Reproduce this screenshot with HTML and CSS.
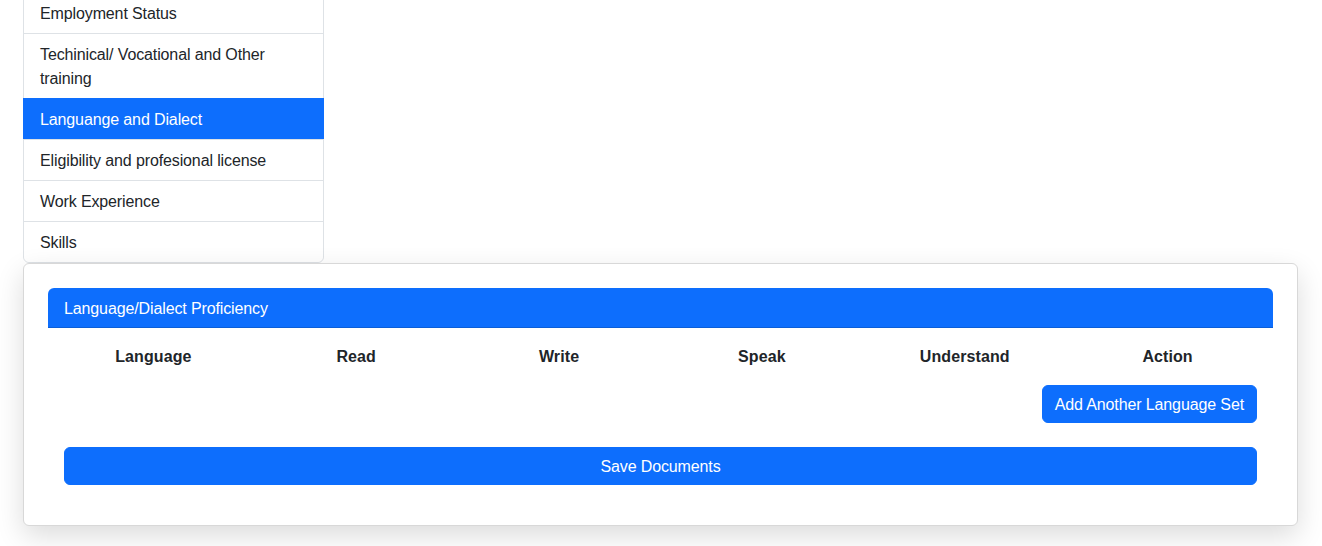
FILE: index.html
```html
<!DOCTYPE html>
<html>
<head>
<meta charset="utf-8">
<link rel="stylesheet" href="styles.css">
</head>
<body>
<div class="page">
  <ul class="list-group">
    <li class="list-item">Employment Status</li>
    <li class="list-item">Techinical/ Vocational and Other training</li>
    <li class="list-item active">Languange and Dialect</li>
    <li class="list-item">Eligibility and profesional license</li>
    <li class="list-item">Work Experience</li>
    <li class="list-item">Skills</li>
  </ul>
  <div class="card">
    <div class="card-header">Language/Dialect Proficiency</div>
    <div class="table-head">
      <div class="th">Language</div>
      <div class="th">Read</div>
      <div class="th">Write</div>
      <div class="th">Speak</div>
      <div class="th">Understand</div>
      <div class="th">Action</div>
    </div>
    <div class="inner">
      <div class="add-row">
        <button class="btn">Add Another Language Set</button>
      </div>
      <button class="btn btn-block">Save Documents</button>
    </div>
  </div>
</div>
</body>
</html>
```
FILE: styles.css
```css
* { box-sizing: border-box; }
html, body { margin: 0; padding: 0; background: #fff; }
body {
  font-family: "Liberation Sans", Arial, sans-serif;
  font-size: 16px;
  line-height: 24px;
  color: #212529;
  letter-spacing: -0.12px;
}
.page {
  margin-top: -8px;
  padding: 0 24px 20px 23px;
}
.list-group {
  list-style: none;
  margin: 0;
  padding: 0;
  width: 301px;
  border: 1px solid #dee2e6;
  border-radius: 0 0 6px 6px;
}
.list-item {
  padding: 9px 16px 7px;
  border-top: 1px solid #dee2e6;
  background: #fff;
}
.list-item:first-child { border-top: 0; }
.list-item:last-child { border-radius: 0 0 6px 6px; }
.list-item.active {
  background: #0d6efd;
  color: #fff;
  border-top-color: #0d6efd;
  margin: 0 -1px;
  padding: 9px 17px 7px;
}
.card {
  border: 1px solid #d8d8d8;
  border-radius: 6px;
  background: #fff;
  box-shadow: 0 10px 28px rgba(0,0,0,0.14);
  padding: 24px;
}
.card-header {
  background: #0d6efd;
  color: #fff;
  height: 40px;
  line-height: 41px;
  padding: 0 16px;
  border-radius: 6px 6px 0 0;
  border-bottom: 1px solid #0b5ed7;
}
.table-head {
  display: grid;
  grid-template-columns: repeat(6, 1fr);
  margin: 0 4px;
  padding: 17px 0 15px;
}
.th {
  text-align: center;
  font-weight: bold;
  letter-spacing: 0.1px;
}
.inner {
  padding: 1px 16px 16px;
}
.add-row {
  display: flex;
  justify-content: flex-end;
  margin-bottom: 24px;
}
.btn {
  font-family: inherit;
  font-size: 16px;
  line-height: 24px;
  letter-spacing: -0.12px;
  color: #fff;
  background: #0d6efd;
  border: 1px solid #0d6efd;
  border-radius: 6px;
  padding: 7px 12px 5px;
  cursor: pointer;
}
.btn-block {
  display: block;
  width: 100%;
}
```
